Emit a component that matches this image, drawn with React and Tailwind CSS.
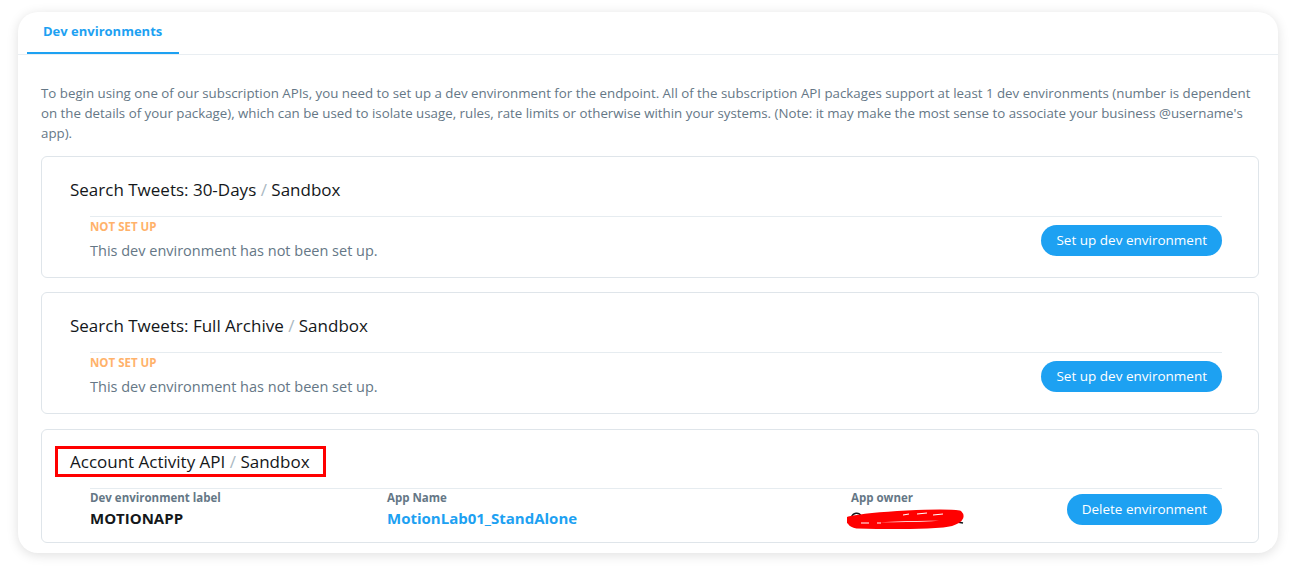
import React from 'react'

const FONT = { fontFamily: '"Open Sans", "Noto Sans", sans-serif' }

const PENDING = [
  { id: 'search-30', name: 'Search Tweets: 30-Days' },
  { id: 'search-full', name: 'Search Tweets: Full Archive' },
]

function Title({ name }) {
  return (
    <h3 className="text-[17px] leading-6 text-[#14171a]">
      {name} <span className="text-[#aab8c2]">/</span> Sandbox
    </h3>
  )
}

function PillButton({ children }) {
  return (
    <button className="h-[31px] rounded-full bg-[#1da1f2] px-[15px] text-[13.5px] text-white">
      {children}
    </button>
  )
}

function Scribble() {
  return (
    <svg width="118" height="22" viewBox="0 0 118 22">
      <path d="M4 11 C 6 5, 12 5, 14 9" stroke="#14171a" strokeWidth="1.6" fill="none" />
      <path d="M110 15 L 116 16" stroke="#14171a" strokeWidth="1.6" />
      <path
        d="M2 13 C 20 9, 40 8, 60 7 C 80 6, 100 5, 112 7 C 116 11, 108 16, 96 17 C 70 19, 40 19, 10 18 C 4 17, 2 15, 8 13 C 40 11, 80 10, 108 10"
        stroke="#ff0000"
        strokeWidth="7"
        strokeLinecap="round"
        strokeLinejoin="round"
        fill="none"
      />
      <path d="M56 8 L 62 7 M70 7 L 80 6 M86 8 L 96 7" stroke="#ffffff" strokeWidth="1.2" />
      <path d="M14 16 L 22 16 M30 16 L 34 16" stroke="#ffffff" strokeWidth="1.2" />
    </svg>
  )
}

function PendingCard({ name }) {
  return (
    <div className="rounded-[6px] border border-[#dfe5ea] pt-[21px] pb-[15px] pl-[28px] pr-[36px]">
      <Title name={name} />
      <div className="ml-[20px] mt-[14px] flex items-center justify-between border-t border-[#e6ecf0] pt-[2px]">
        <div>
          <div className="text-[11.5px] font-bold leading-[16px] text-[#ffb26b]">NOT SET UP</div>
          <div className="mt-[5px] text-[14.5px] leading-[22px] text-[#657786]">
            This dev environment has not been set up.
          </div>
        </div>
        <PillButton>Set up dev environment</PillButton>
      </div>
    </div>
  )
}

function ActiveCard() {
  return (
    <div className="mt-[1px] rounded-[6px] border border-[#dfe5ea] pt-[20px] pb-[14px] pl-[28px] pr-[36px]">
      <div className="relative inline-block">
        <div className="absolute -left-[15px] -right-[16px] -top-[4px] -bottom-[3px] border-[3px] border-[#ff0000]" />
        <Title name="Account Activity API" />
      </div>
      <div className="ml-[20px] mt-[14px] grid grid-cols-[297px_464px_1fr_auto] items-center border-t border-[#e6ecf0] pt-[1px]">
        <div>
          <div className="text-[11.5px] font-bold leading-[16px] text-[#657786]">Dev environment label</div>
          <div className="mt-[2px] text-[15px] font-bold leading-[20px] text-[#14171a]">MOTIONAPP</div>
        </div>
        <div>
          <div className="text-[11.5px] font-bold leading-[16px] text-[#657786]">App Name</div>
          <div className="mt-[2px] text-[15px] font-bold leading-[20px] text-[#1da1f2]">MotionLab01_StandAlone</div>
        </div>
        <div>
          <div className="text-[11.5px] font-bold leading-[16px] text-[#657786]">App owner</div>
          <div className="mt-[1px] -ml-[4px] h-[21px]">
            <Scribble />
          </div>
        </div>
        <PillButton>Delete environment</PillButton>
      </div>
    </div>
  )
}

export default function App() {
  return (
    <div className="min-h-[578px] bg-white px-[18px] pt-[12px]" style={FONT}>
      <div className="w-[1260px] rounded-[20px] bg-white pb-[10px] shadow-[0_2px_12px_rgba(0,0,0,0.13)]">
        {/* Tabs */}
        <div className="flex border-b border-[#e9eef2] pl-[9px]">
          <div className="w-[152px] border-b-2 border-[#1da1f2] pt-[11px] pb-[12px] pl-[16px] text-[13px] font-bold leading-[17px] text-[#1da1f2]">
            Dev environments
          </div>
        </div>

        <div className="px-[23px] pr-[19px]">
          <p className="mt-[28px] text-[13.3px] leading-[20px] text-[#657786]">
            To begin using one of our subscription APIs, you need to set up a dev environment for the endpoint. All of the subscription API packages support at least 1 dev environments (number is dependent
            <br />
            on the details of your package), which can be used to isolate usage, rules, rate limits or otherwise within your systems. (Note: it may make the most sense to associate your business @username's
            <br />
            app).
          </p>

          <div className="mt-[13px] flex flex-col gap-[14px]">
            {PENDING.map(p => (
              <PendingCard key={p.id} name={p.name} />
            ))}
            <ActiveCard />
          </div>
        </div>
      </div>
    </div>
  )
}
